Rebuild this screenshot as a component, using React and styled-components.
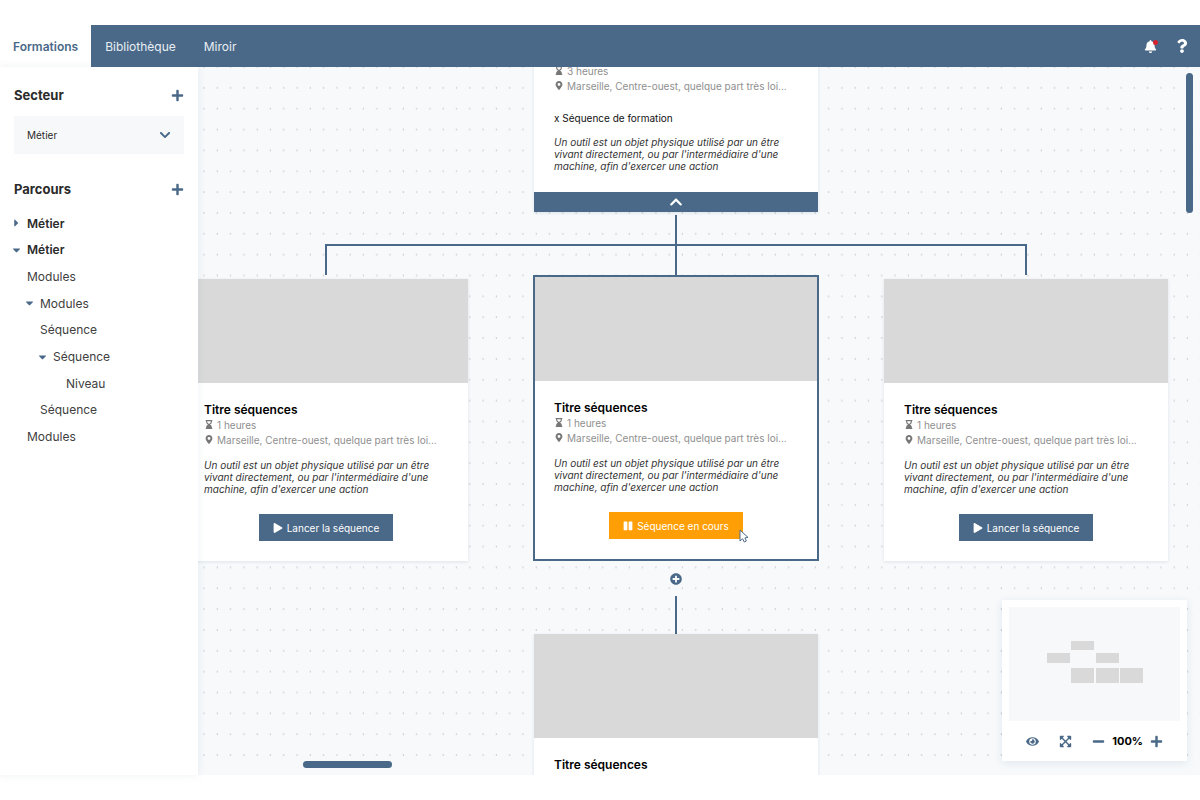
import React, { useState } from 'react';

import styled, { createGlobalStyle, css } from 'styled-components';

import {
  FaBell,
  FaCaretDown,
  FaCaretRight,
  FaChevronDown,
  FaChevronUp,
  FaExpandArrowsAlt,
  FaEye,
  FaHourglassEnd,
  FaMapMarkerAlt,
  FaMinus,
  FaPause,
  FaPlay,
  FaPlus,
  FaPlusCircle,
  FaQuestion,
} from 'react-icons/fa';

const blue = '#4a6988';
const orange = '#ff9f05';
const grey = '#d9d9d9';
const pale = '#f6f8fa';

const GlobalStyle = createGlobalStyle`
  * {
    box-sizing: border-box;
  }
  body {
    margin: 0;
    background: #fff;
    color: #2b2b2b;
    font-family: Inter, 'Liberation Sans', sans-serif;
  }
  button, select {
    font-family: inherit;
    cursor: pointer;
  }
  h2, h3, p, ul {
    margin: 0;
    padding: 0;
  }
`;

const Page = styled.div`
  display: flex;
  flex-direction: column;
  height: 100vh;
  padding: 25px 0;
`;

const TopBar = styled.header`
  display: flex;
  justify-content: space-between;
  flex-shrink: 0;
  height: 42px;
  background-color: ${blue};
`;

const Tabs = styled.nav`
  display: flex;
`;

const Tab = styled.a`
  display: flex;
  align-items: center;
  padding: 0 14px;
  font-size: 12px;
  color: #e9eef3;
  text-decoration: none;
  &:first-child {
    padding: 0 13px;
  }
  ${({ $active }) => $active && css`
    background-color: #fff;
    color: ${blue};
    font-weight: 600;
  `}
`;

const TopActions = styled.div`
  display: flex;
  align-items: center;
  gap: 18px;
  padding-right: 11px;
`;

const IconButton = styled.button`
  display: flex;
  align-items: center;
  justify-content: center;
  padding: 0;
  border: none;
  background: transparent;
  color: ${({ $color }) => $color || blue};
  font-size: ${({ $size }) => $size || 13}px;
`;

const Bell = styled(IconButton)`
  position: relative;
  &::after {
    content: '';
    position: absolute;
    top: 0;
    right: -1px;
    width: 5px;
    height: 5px;
    border-radius: 50%;
    background-color: #d8232f;
  }
`;

const Body = styled.div`
  display: flex;
  flex: 1;
  min-height: 0;
`;

const Sidebar = styled.aside`
  z-index: 1;
  flex-shrink: 0;
  width: 198px;
  padding: 18px 14px;
  background-color: #fff;
  box-shadow: 0 0 8px rgba(74, 105, 136, 0.1);
`;

const SectionHead = styled.div`
  display: flex;
  align-items: center;
  justify-content: space-between;
  height: 20px;
  h2 {
    font-size: 13px;
    font-weight: 700;
  }
`;

const SelectBox = styled.label`
  display: flex;
  align-items: center;
  height: 38px;
  margin: 11px 0 25px;
  padding: 0 13px;
  background-color: ${pale};
  color: ${blue};
  font-size: 12px;
  select {
    flex: 1;
    padding: 0;
    border: none;
    outline: none;
    appearance: none;
    background: transparent;
    color: #2b2b2b;
    font-size: 10px;
  }
`;

const Tree = styled.ul`
  display: grid;
  grid-auto-rows: 1fr;
  height: 240px;
  margin-top: 11px;
  list-style: none;
`;

const TreeItem = styled.li`
  display: flex;
  align-items: center;
  padding-left: ${({ $level }) => $level * 13}px;
  font-size: 12px;
  font-weight: ${({ $bold }) => ($bold ? 600 : 400)};
  color: ${({ $bold }) => ($bold ? '#2b2b2b' : '#404040')};
  svg {
    width: 13px;
    margin-left: -4px;
    margin-right: 4px;
    color: ${blue};
    font-size: 12px;
  }
`;

const Blank = styled.span`
  width: 13px;
`;

const Canvas = styled.main`
  position: relative;
  flex: 1;
  overflow: hidden;
  background-color: #f7f9fb;
`;

const Drawing = styled.svg`
  position: absolute;
  top: 0;
  left: 0;
  width: 100%;
  height: 100%;
`;

// a node sits freely on the canvas, at the point given by the diagram
const Node = styled.article`
  position: absolute;
  top: ${({ $y }) => $y}px;
  left: ${({ $x }) => $x}px;
  width: 284px;
  background-color: #fff;
  box-shadow: 0 1px 3px rgba(74, 105, 136, 0.14);
  ${({ $active }) => $active && css`
    width: 286px;
    border: 2px solid ${blue};
    box-shadow: none;
  `}
`;

const Cover = styled.div`
  height: 104px;
  background-color: ${grey};
`;

const NodeBody = styled.div`
  padding: 20px ${({ $active }) => ($active ? 19 : 20)}px;
  h3 {
    line-height: 14px;
    font-size: 12px;
    font-weight: 600;
    color: #000;
  }
`;

const Meta = styled.p`
  display: flex;
  align-items: center;
  gap: 3px;
  height: 15px;
  font-size: 10px;
  color: #8f8f8f;
  white-space: nowrap;
  svg {
    flex-shrink: 0;
    width: 10px;
    font-size: 9px;
    color: #777;
  }
`;

const SubTitle = styled.p`
  margin-top: 19px;
  line-height: 12px;
  font-size: 10px;
  color: #111;
`;

const Description = styled.p`
  margin-top: 12px;
  line-height: 12px;
  font-size: 10px;
  font-style: italic;
  color: #333;
`;

const LaunchButton = styled.button`
  display: flex;
  align-items: center;
  justify-content: center;
  gap: 4px;
  height: 27px;
  margin: 19px auto 0;
  padding: 0 14px;
  border: none;
  background-color: ${({ $running }) => ($running ? orange : blue)};
  color: #fff;
  font-size: 10px;
`;

const Collapse = styled.button`
  display: flex;
  align-items: center;
  justify-content: center;
  width: 100%;
  height: 20px;
  padding: 0;
  border: none;
  background-color: ${blue};
  color: #fff;
  font-size: 14px;
`;

const AddNode = styled(IconButton)`
  position: absolute;
  top: 506px;
  left: 472px;
`;

const Pointer = styled.svg`
  position: absolute;
  top: 462px;
  left: 541px;
  width: 10px;
  height: 14px;
`;

const ScrollThumb = styled.div`
  position: absolute;
  border-radius: 4px;
  background-color: ${blue};
  ${({ $vertical }) => ($vertical ? css`
    top: 6px;
    right: 7px;
    width: 7px;
    height: 140px;
  ` : css`
    bottom: 7px;
    left: 105px;
    width: 89px;
    height: 7px;
  `)}
`;

const MiniMap = styled.section`
  position: absolute;
  right: 13px;
  bottom: 14px;
  width: 185px;
  padding: 7px 7px 0;
  background-color: #fff;
  box-shadow: 0 2px 8px rgba(74, 105, 136, 0.12);
  > svg {
    display: block;
    width: 100%;
    background-color: ${pale};
  }
`;

const MapTools = styled.div`
  display: flex;
  align-items: center;
  justify-content: space-between;
  height: 40px;
  padding: 0 17px;
`;

const ZoomGroup = styled.div`
  display: flex;
  align-items: center;
  gap: 7px;
  font-size: 11px;
  font-weight: 700;
  color: #000;
`;

const treeItems = [
  { label: 'Métier', level: 0, caret: 'right', bold: true },
  { label: 'Métier', level: 0, caret: 'down', bold: true },
  { label: 'Modules', level: 0 },
  { label: 'Modules', level: 1, caret: 'down' },
  { label: 'Séquence', level: 1 },
  { label: 'Séquence', level: 2, caret: 'down' },
  { label: 'Niveau', level: 3 },
  { label: 'Séquence', level: 1 },
  { label: 'Modules', level: 0 },
];

const nodes = [
  { id: 'top', x: 336, y: -142, hours: 3, sub: 'x Séquence de formation', collapsible: true },
  { id: 'left', x: -14, y: 212, hours: 1 },
  { id: 'center', x: 335, y: 208, hours: 1, active: true },
  { id: 'right', x: 686, y: 212, hours: 1 },
  { id: 'bottom', x: 336, y: 567, hours: 1 },
];

const mapBlocks = [
  [62, 34, 23, 9],
  [38, 46, 23, 10],
  [87, 46, 23, 10],
  [62, 61, 23, 15],
  [87, 61, 23, 15],
  [111, 61, 23, 15],
];

const SequenceNode = ({ node }) => {
  const { x, y, hours, sub, active, collapsible } = node;

  return (
    <Node $x={x} $y={y} $active={active}>
      <Cover />
      <NodeBody $active={active}>
        <h3>Titre séquences</h3>
        <Meta><FaHourglassEnd />{hours} heures</Meta>
        <Meta><FaMapMarkerAlt />Marseille, Centre-ouest, quelque part très loi...</Meta>
        {sub && <SubTitle>{sub}</SubTitle>}
        <Description>
          Un outil est un objet physique utilisé par un être
          <br />
          vivant directement, ou par l'intermédiaire d'une
          <br />
          machine, afin d'exercer une action
        </Description>
        {!collapsible && (
          <LaunchButton $running={active}>
            {active ? <FaPause /> : <FaPlay />}
            {active ? 'Séquence en cours' : 'Lancer la séquence'}
          </LaunchButton>
        )}
      </NodeBody>
      {collapsible && <Collapse aria-label='Replier'><FaChevronUp /></Collapse>}
    </Node>
  );
};

const App = () => {
  const [sector, setSector] = useState('metier');

  return (
    <>
      <GlobalStyle />
      <Page>
        <TopBar>
          <Tabs>
            <Tab href='#formations' $active>Formations</Tab>
            <Tab href='#bibliotheque'>Bibliothèque</Tab>
            <Tab href='#miroir'>Miroir</Tab>
          </Tabs>
          <TopActions>
            <Bell $color='#fff' $size={13} aria-label='Notifications'><FaBell /></Bell>
            <IconButton $color='#fff' $size={14} aria-label='Aide'><FaQuestion /></IconButton>
          </TopActions>
        </TopBar>
        <Body>
          <Sidebar>
            <SectionHead>
              <h2>Secteur</h2>
              <IconButton aria-label='Ajouter un secteur'><FaPlus /></IconButton>
            </SectionHead>
            <SelectBox>
              <select aria-label='Secteur' value={sector} onChange={e => setSector(e.target.value)}>
                <option value='metier'>Métier</option>
              </select>
              <FaChevronDown />
            </SelectBox>
            <SectionHead>
              <h2>Parcours</h2>
              <IconButton aria-label='Ajouter un parcours'><FaPlus /></IconButton>
            </SectionHead>
            <Tree>
              {
                treeItems.map((item, index) => {
                  return (
                    <TreeItem key={index} $level={item.level} $bold={item.bold}>
                      {item.caret === 'right' && <FaCaretRight />}
                      {item.caret === 'down' && <FaCaretDown />}
                      {!item.caret && <Blank />}
                      {item.label}
                    </TreeItem>
                  );
                })
              }
            </Tree>
          </Sidebar>
          <Canvas>
            <Drawing aria-hidden='true'>
              <defs>
                <pattern id='dots' x='-1' y='-1' width='13.29' height='20.85' patternUnits='userSpaceOnUse'>
                  <circle cx='7' cy='1' r='0.7' fill='#b9bec4' />
                </pattern>
              </defs>
              <rect width='100%' height='100%' fill='url(#dots)' />
              <g fill='none' stroke={blue} strokeWidth='2'>
                <path d='M478 148V209' />
                <path d='M128 208V178H828V208' />
                <path d='M478 529V567' />
              </g>
            </Drawing>
            {nodes.map(node => <SequenceNode key={node.id} node={node} />)}
            <AddNode aria-label='Ajouter une séquence' $size={12}><FaPlusCircle /></AddNode>
            <Pointer viewBox='0 0 10 14' aria-hidden='true'>
              <path
                d='M1 1V12L3.6 9.8L5.3 13L7.4 12L5.9 8.9L9 8.4Z'
                fill='#fff'
                stroke={blue}
                strokeLinejoin='round'
              />
            </Pointer>
            <ScrollThumb $vertical />
            <ScrollThumb />
            <MiniMap>
              <svg viewBox='0 0 171 114' aria-hidden='true'>
                {
                  mapBlocks.map(([x, y, width, height]) => (
                    <rect key={`${x}-${y}`} x={x} y={y} width={width} height={height} fill={grey} />
                  ))
                }
              </svg>
              <MapTools>
                <IconButton aria-label='Aperçu'><FaEye /></IconButton>
                <IconButton aria-label='Plein écran'><FaExpandArrowsAlt /></IconButton>
                <ZoomGroup>
                  <IconButton aria-label='Zoom arrière'><FaMinus /></IconButton>
                  100%
                  <IconButton aria-label='Zoom avant'><FaPlus /></IconButton>
                </ZoomGroup>
              </MapTools>
            </MiniMap>
          </Canvas>
        </Body>
      </Page>
    </>
  );
};

export default App;
